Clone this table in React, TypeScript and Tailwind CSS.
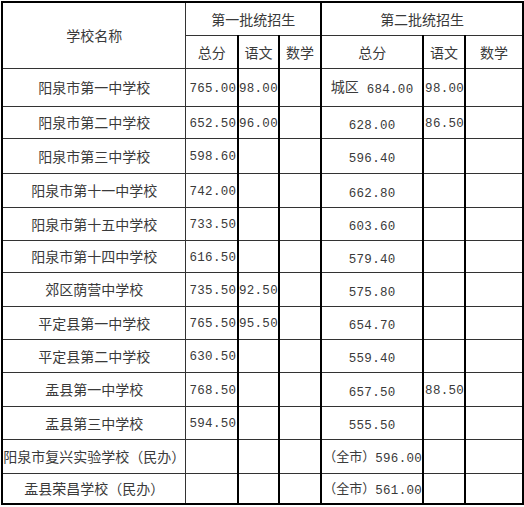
const ROWS: Array<{ name: string; t1: string; y1: string; t2: string; y2: string; h: string }> = [
  { name: "阳泉市第一中学校", t1: "765.00", y1: "98.00", t2: "城区 684.00", y2: "98.00", h: "h-[38px]" },
  { name: "阳泉市第二中学校", t1: "652.50", y1: "96.00", t2: "628.00", y2: "86.50", h: "h-[32px]" },
  { name: "阳泉市第三中学校", t1: "598.60", y1: "", t2: "596.40", y2: "", h: "h-[35px]" },
  { name: "阳泉市第十一中学校", t1: "742.00", y1: "", t2: "662.80", y2: "", h: "h-[34px]" },
  { name: "阳泉市第十五中学校", t1: "733.50", y1: "", t2: "603.60", y2: "", h: "h-[33px]" },
  { name: "阳泉市第十四中学校", t1: "616.50", y1: "", t2: "579.40", y2: "", h: "h-[32px]" },
  { name: "郊区荫营中学校", t1: "735.50", y1: "92.50", t2: "575.80", y2: "", h: "h-[34px]" },
  { name: "平定县第一中学校", t1: "765.50", y1: "95.50", t2: "654.70", y2: "", h: "h-[33px]" },
  { name: "平定县第二中学校", t1: "630.50", y1: "", t2: "559.40", y2: "", h: "h-[33px]" },
  { name: "盂县第一中学校", t1: "768.50", y1: "", t2: "657.50", y2: "88.50", h: "h-[34px]" },
  { name: "盂县第三中学校", t1: "594.50", y1: "", t2: "555.50", y2: "", h: "h-[33px]" },
  { name: "阳泉市复兴实验学校（民办）", t1: "", y1: "", t2: "（全市）596.00", y2: "", h: "h-[34px]" },
  { name: "盂县荣昌学校（民办）", t1: "", y1: "", t2: "（全市）561.00", y2: "", h: "h-[31px]" },
];

const cjk = "font-['Noto_Sans_CJK_SC','Noto_Sans',sans-serif]";
const mono = "font-['Liberation_Mono','Noto_Sans_CJK_SC',monospace] text-[12.5px] tracking-[0.3px]";

// thin cell = 1px dark grid line; thick = the heavy vertical rules around 语文
const thin = "border border-[#333]";
const thick = "border border-[#333] border-x-2 border-x-black";

export default function App() {
  return (
    <div className="w-[524px] h-[507px] bg-white pl-[1px] pt-[1px]">
      <table className={`table-fixed border-collapse border-2 border-black text-[#3a3a3a] text-[14px] leading-none ${cjk}`}>
        <colgroup>
          <col className="w-[184px]" />
          <col className="w-[52px]" />
          <col className="w-[39px]" />
          <col className="w-[43px]" />
          <col className="w-[98px]" />
          <col className="w-[42px]" />
          <col className="w-[59px]" />
        </colgroup>
        <thead>
          <tr className="h-[33px]">
            <th rowSpan={2} className={`${thin} font-normal text-center`}>
              学校名称
            </th>
            <th colSpan={3} className={`${thin} border-r-2 border-r-black font-normal text-center`}>
              第一批统招生
            </th>
            <th colSpan={3} className={`${thin} font-normal text-center`}>
              第二批统招生
            </th>
          </tr>
          <tr className="h-[33px]">
            <th className={`${thin} font-normal text-center`}>总分</th>
            <th className={`${thick} font-normal text-center`}>语文</th>
            <th className={`${thin} border-r-2 border-r-black font-normal text-center`}>数学</th>
            <th className={`${thin} font-normal text-center`}>总分</th>
            <th className={`${thick} font-normal text-center`}>语文</th>
            <th className={`${thin} font-normal text-center`}>数学</th>
          </tr>
        </thead>
        <tbody>
          {ROWS.map((r) => (
            <tr key={r.name} className={r.h}>
              <td className={`${thin} text-center whitespace-nowrap px-0`}>{r.name}</td>
              <td className={`${thin} pl-[3px] pt-[4px] whitespace-nowrap ${mono}`}>{r.t1}</td>
              <td className={`${thick} pl-0 pt-[4px] whitespace-nowrap ${mono}`}>{r.y1}</td>
              <td className={`${thin} border-r-2 border-r-black`}></td>
              <td
                className={`${thin} whitespace-nowrap overflow-visible ${
                  r.t2.startsWith("（") ? "text-left pl-[1px]" : "text-center"
                }`}
              >
                {r.t2.startsWith("（") ? (
                  <span>
                    <span className="text-[13px]">（全市）</span>
                    <span className={`${mono} relative top-[1px]`}>{r.t2.replace("（全市）", "")}</span>
                  </span>
                ) : r.t2.startsWith("城区") ? (
                  <span>
                    <span>城区</span>
                    <span className={`${mono} relative top-[1px]`}> {r.t2.replace("城区 ", "")}</span>
                  </span>
                ) : (
                  <span className={`${mono} relative top-[2px]`}>{r.t2}</span>
                )}
              </td>
              <td className={`${thick} pl-[1px] pt-[4px] whitespace-nowrap ${mono}`}>{r.y2}</td>
              <td className={thin}></td>
            </tr>
          ))}
        </tbody>
      </table>
    </div>
  );
}
